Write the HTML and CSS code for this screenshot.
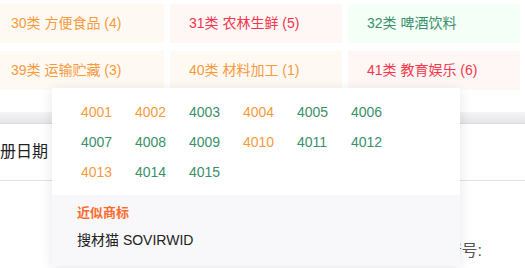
FILE: index.html
```html
<!DOCTYPE html>
<html lang="zh">
<head>
<meta charset="utf-8">
<link rel="stylesheet" href="styles.css">
</head>
<body>
<div class="page">
  <div class="cards">
    <div class="card c-orange">30类 方便食品 (4)</div>
    <div class="card c-red">31类 农林生鲜 (5)</div>
    <div class="card c-green">32类 啤酒饮料</div>
    <div class="card c-orange">39类 运输贮藏 (3)</div>
    <div class="card c-orange">40类 材料加工 (1)</div>
    <div class="card c-red">41类 教育娱乐 (6)</div>
  </div>
  <div class="table">
    <div class="band"></div>
    <div class="row row-head"><span class="cell-date">册日期</span></div>
    <div class="row row-body"><span class="cell-no">申请号:</span></div>
  </div>

  <div class="popup">
    <div class="codes">
      <span class="o">4001</span><span class="o">4002</span><span class="g">4003</span><span class="o">4004</span><span class="g">4005</span><span class="g">4006</span>
      <span class="g">4007</span><span class="g">4008</span><span class="g">4009</span><span class="o">4010</span><span class="g">4011</span><span class="g">4012</span>
      <span class="o">4013</span><span class="g">4014</span><span class="g">4015</span>
    </div>
    <div class="similar">
      <div class="similar-title">近似商标</div>
      <div class="similar-item">搜材猫 SOVIRWID</div>
    </div>
  </div>
</div>
</body>
</html>
```

FILE: styles.css
```css
* { box-sizing: border-box; }
html, body { margin: 0; padding: 0; background: #fff; }
body {
  font-family: "Liberation Sans", "Noto Sans CJK SC", sans-serif;
  font-size: 14px;
  color: #333;
}
.page {
  position: relative;
  width: 525px;
  height: 268px;
  overflow: hidden;
}
.cards {
  display: grid;
  grid-template-columns: repeat(3, 172px);
  column-gap: 6px;
  row-gap: 8px;
  margin-left: -8px;
  padding-top: 4px;
}
.card {
  height: 39px;
  line-height: 39px;
  padding-left: 19px;
  font-size: 14px;
  white-space: nowrap;
}
.c-orange { background: #fff9f4; color: #f89a3c; }
.c-red { background: #fff6f6; color: #f2364b; }
.c-green { background: #f4fff8; color: #3b8f6b; }

.table { margin-top: 22px; }
.band {
  height: 12px;
  background: linear-gradient(#f4f4f6, #e6e6e9);
  border-bottom: 1px solid #dadade;
}
.row-head {
  height: 57px;
  border-bottom: 1px solid #e2e2e5;
  display: flex;
  align-items: center;
  padding-bottom: 5px;
}
.cell-date {
  font-size: 16px;
  color: #222;
  margin-left: 0;
}
.row-body {
  height: 86px;
  display: flex;
  justify-content: flex-end;
  align-items: flex-end;
  padding-bottom: 6px;
  padding-right: 43px;
}
.cell-no {
  font-size: 16px;
  color: #555;
}

.popup {
  position: absolute;
  left: 52px;
  top: 88px;
  width: 408px;
  height: 178px;
  background: #fff;
  box-shadow: 0 2px 12px rgba(0, 0, 0, 0.1);
  display: flex;
  flex-direction: column;
}
.codes {
  display: grid;
  grid-template-columns: repeat(6, 54px);
  grid-auto-rows: 30px;
  align-items: center;
  padding: 9px 0 8px 29px;
  font-size: 14px;
}
.codes .o { color: #f89a3c; }
.codes .g { color: #3b8f6b; }
.similar {
  flex: 1;
  background: #f8f8fa;
  padding: 8px 0 0 25px;
}
.similar-title {
  line-height: 20px;
  font-size: 13px;
  font-weight: bold;
  color: #ff6a2a;
}
.similar-item {
  margin-top: 7px;
  line-height: 20px;
  font-size: 14px;
  color: #222;
}
```
